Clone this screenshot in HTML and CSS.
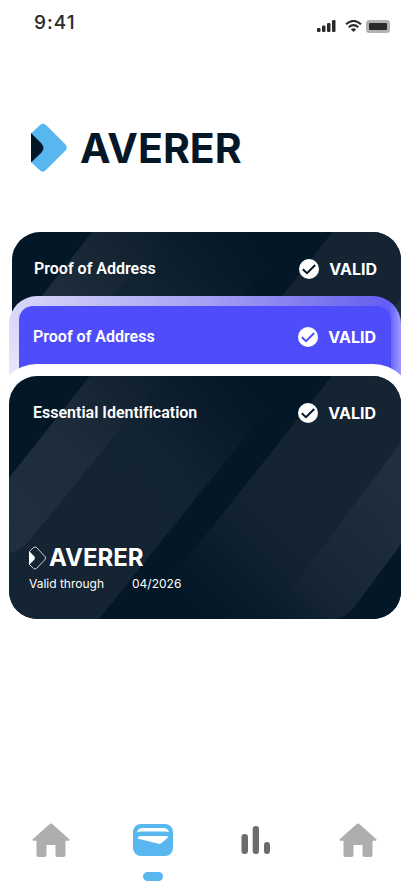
FILE: index.html
```html
<!DOCTYPE html>
<html lang="en">
<head>
<meta charset="utf-8">
<meta name="viewport" content="width=device-width, initial-scale=1">
<title>Averer wallet</title>
<link rel="stylesheet" href="styles.css">
</head>
<body>
<svg class="defs" aria-hidden="true">
  <defs>
    <linearGradient id="fadeA" gradientUnits="userSpaceOnUse" x1="0" y1="150" x2="150" y2="0">
      <stop offset="0" stop-color="#202f3d"/><stop offset=".5" stop-color="#1d2c3a"/><stop offset="1" stop-color="#0d1e2e"/>
    </linearGradient>
    <linearGradient id="fadeB" gradientUnits="userSpaceOnUse" x1="90" y1="150" x2="245" y2="20">
      <stop offset="0" stop-color="#142433"/><stop offset=".5" stop-color="#112232"/><stop offset="1" stop-color="#041727"/>
    </linearGradient>
    <linearGradient id="fadeC" gradientUnits="userSpaceOnUse" x1="300" y1="100" x2="180" y2="220">
      <stop offset="0" stop-color="#152433"/><stop offset=".4" stop-color="#122231"/><stop offset="1" stop-color="#041727"/>
    </linearGradient>
    <linearGradient id="fadeD" gradientUnits="userSpaceOnUse" x1="391" y1="110" x2="270" y2="215">
      <stop offset="0" stop-color="#202f3d"/><stop offset=".5" stop-color="#1a2937"/><stop offset="1" stop-color="#1a2937" stop-opacity="0"/>
    </linearGradient>
    <symbol id="texture" viewBox="0 0 392 243" preserveAspectRatio="none">
      <path fill="#041727" d="M0 0h392v243H0z"/>
      <path fill="url(#fadeB)" d="M81 0H285L90 243H0V102z"/>
      <path fill="url(#fadeA)" d="M81 0H154L20 165Q10 176 0 177V102z"/>
      <path fill="url(#fadeC)" d="M323 0H392V243H130z"/>
      <path fill="#041727" d="M392 168V243H325Q337 242 346 230z"/>
      <path fill="url(#fadeD)" d="M392 66V168L346 230Q337 242 325 243H260z"/>
    </symbol>
    <symbol id="check" viewBox="0 0 20 20">
      <circle cx="10" cy="10" r="10" fill="#fff"/>
      <path d="M3.800 10.200 8 14.200 16.200 6" fill="none" stroke="var(--mark)" stroke-width="2"/>
    </symbol>
    <symbol id="home" viewBox="0 0 38 34">
      <path d="M18 .8Q19 0 20 .8L37.600 16.600Q37.800 17.600 37 17.800H33.500V32Q33.500 34 31.500 34H25.500Q23.500 34 23.500 32V22H14.500V32Q14.500 34 12.500 34H6.500Q4.500 34 4.500 32V17.800H1Q.2 17.600 .4 16.600Z"/>
    </symbol>
  </defs>
</svg>

<header class="status">
  <time class="clock">9:41</time>
  <div class="signals">
    <svg width="19" height="12" viewBox="0 0 19 12" aria-label="Signal"><g fill="#29292b"><rect y="8" width="3.500" height="4" rx="1.200"/><rect x="5" y="5.500" width="3.500" height="6.500" rx="1.200"/><rect x="10" y="3" width="3.500" height="9" rx="1.200"/><rect x="15" width="3.500" height="12" rx="1.200"/></g></svg>
    <svg class="wifi" width="17" height="12" viewBox="0 0 17 12" aria-label="Wi-Fi"><g fill="none" stroke="#29292b" stroke-width="2"><path d="M1 4.200Q8.500-2.400 16 4.200"/><path d="M3.700 7.300Q8.500 3 13.300 7.300"/></g><path fill="#29292b" d="M5.800 9.300Q8.500 7.300 11.200 9.300L8.500 12z"/></svg>
    <svg width="24" height="13" viewBox="0 0 24 13" aria-label="Battery"><rect width="24" height="13" rx="3.500" fill="#b1b1b1"/><rect x="3" y="3" width="18" height="7" rx="1" fill="#29292b"/></svg>
  </div>
</header>

<main>
  <h1 class="brand">
    <svg width="36" height="50" viewBox="0 0 36 50" aria-hidden="true">
      <path fill="#58b7ef" d="M0 10.500 9 2Q12-.5 15 2L34.500 21.500Q37 24.500 34.500 27.500L15 47Q12 50 9 47.500L0 39z"/>
      <path fill="#041727" d="M0 10 10.500 20.500Q14.500 25 10.500 29.500L0 39.500z"/>
    </svg>
    <span>AVERER</span>
  </h1>

  <section class="stack" aria-label="Documents">
    <article class="card back">
      <svg class="texture" aria-hidden="true"><use href="#texture"/></svg>
      <div class="row"><h2>Proof of Address</h2><span class="valid"><svg class="check" aria-hidden="true"><use href="#check"/></svg>VALID</span></div>
    </article>
    <article class="card glass">
      <div class="row panel"><h2>Proof of Address</h2><span class="valid"><svg class="check" aria-hidden="true"><use href="#check"/></svg>VALID</span></div>
    </article>
    <article class="card front">
      <svg class="texture" aria-hidden="true"><use href="#texture"/></svg>
      <div class="row"><h2>Essential Identification</h2><span class="valid"><svg class="check" aria-hidden="true"><use href="#check"/></svg>VALID</span></div>
      <div class="issuer">
        <div class="mini">
          <svg width="17" height="24" viewBox="0 0 17 24" aria-hidden="true">
            <path fill="none" stroke="#fff" stroke-width=".8" d="M.5 5.500 4.500 1.500Q6 .3 7.500 1.500L16 10.500Q17 12 16 13.500L7.500 22.500Q6 23.700 4.500 22.500L.5 18.500z"/>
            <path fill="#fff" d="M0 5 5.200 10.300Q6.800 12 5.200 13.700L0 19z"/>
          </svg>
          <span>AVERER</span>
        </div>
        <p class="expiry"><span>Valid through</span><time datetime="2026-04">04/2026</time></p>
      </div>
    </article>
  </section>
</main>

<nav class="tabs" aria-label="Main">
  <a href="#home" aria-label="Home"><svg width="38" height="34" fill="#aeaeae"><use href="#home"/></svg></a>
  <a href="#wallet" aria-label="Wallet" aria-current="page" class="active">
    <svg width="40" height="34" viewBox="0 0 40 34"><rect y="1" width="40" height="32" rx="8" fill="#58b7ef"/><path fill="#fff" d="M4 9.500Q4.500 5 10 5H30Q35.500 5 36 9.500Q34.500 8.500 32 8.500H8Q5.500 8.500 4 9.500zM4.500 15.500Q5 13 8 13H32Q35 13 35.500 14L28 20.500Q27 21.300 25.500 20.800z"/></svg>
  </a>
  <a href="#stats" aria-label="Statistics"><svg width="30" height="34" viewBox="0 0 30 34" fill="#6c6c6c"><rect x="0.500" y="11" width="6.500" height="20" rx="3.200"/><rect x="11.700" y="3" width="6.300" height="28" rx="3.100"/><rect x="23" y="19" width="6" height="12" rx="3"/></svg></a>
  <a href="#profile" aria-label="Property"><svg width="38" height="34" fill="#aeaeae"><use href="#home"/></svg></a>
</nav>
</body>
</html>
```
FILE: styles.css
```css
* { box-sizing: border-box; }
body {
  margin: 0;
  min-height: 100vh;
  display: flex;
  flex-direction: column;
  background: #fff;
  color: #041727;
  font-family: Inter, "Liberation Sans", sans-serif;
}
h1, h2, p { margin: 0; }
svg { display: block; flex: none; }
.defs { position: absolute; width: 0; height: 0; }

.status {
  display: flex;
  justify-content: space-between;
  align-items: center;
  padding: 11px 22px 0 34px;
  color: #29292b;
}
.clock { font-size: 19px; line-height: 24px; font-weight: 500; letter-spacing: 1px; }
.signals { display: flex; align-items: center; padding-top: 6px; }
.wifi { margin: 0 4px 0 9px; }

.brand {
  display: flex;
  align-items: center;
  gap: 13px;
  padding: 88px 31px 0;
  font-size: 41px;
  line-height: 50px;
  font-weight: 700;
}

.stack { padding: 59px 11px 0 9px; }
.card { position: relative; --mark: #041727; color: #fff; }
.texture { position: absolute; top: 0; left: 0; width: 100%; height: 243px; }
.row { position: relative; display: flex; justify-content: space-between; align-items: center; }
h2 { font: 600 16px/20px Roboto, "Liberation Sans", sans-serif; font-variant-ligatures: none; }
.valid { display: flex; align-items: center; gap: 10px; font-size: 16px; line-height: 20px; font-weight: 700; }
.check { width: 20px; height: 20px; }

.back {
  height: 112px;
  margin-left: 3px;
  padding: 27px 24px 0 22px;
  border-radius: 28px 28px 0 0;
  overflow: hidden;
}
.glass {
  --mark: #4f4dfb;
  margin-top: -48px;
  padding: 10px 10px 0;
  border-radius: 28px 28px 0 0;
  background:
    linear-gradient(0deg, #e9e8ff, #e9e8ff00) 0 100% / 10px 60px no-repeat,
    linear-gradient(90deg, #d9d8f7, #a5a1f3 50%, #6a66ee 92%, #615dfa 97%, #a09cff);
}
.panel {
  height: 70px;
  padding: 0 15px 8px 14px;
  border-radius: 14px 14px 0 0;
  background: #4f4dfb;
}
.front {
  border-radius: 28px;
  box-shadow: 0 0 0 12px #fff;
  overflow: hidden;
  padding: 27px 25px 27px 24px;
}
.front .texture { height: 100%; }
.issuer { position: relative; margin: 121px 0 0 -4px; }
.mini { display: flex; align-items: center; gap: 3px; font-size: 24px; line-height: 28px; font-weight: 700; }
.expiry { display: flex; gap: 28px; margin-top: 4px; font-size: 12px; line-height: 16px; }

.tabs {
  display: grid;
  grid-template-columns: repeat(4, 1fr);
  margin-top: auto;
  padding: 0 3px 13px 0;
}
.tabs a { display: flex; flex-direction: column; align-items: center; }
.active::after {
  content: "";
  width: 20px;
  height: 9px;
  margin-top: 15px;
  border-radius: 5px;
  background: #58b7ef;
}
```
